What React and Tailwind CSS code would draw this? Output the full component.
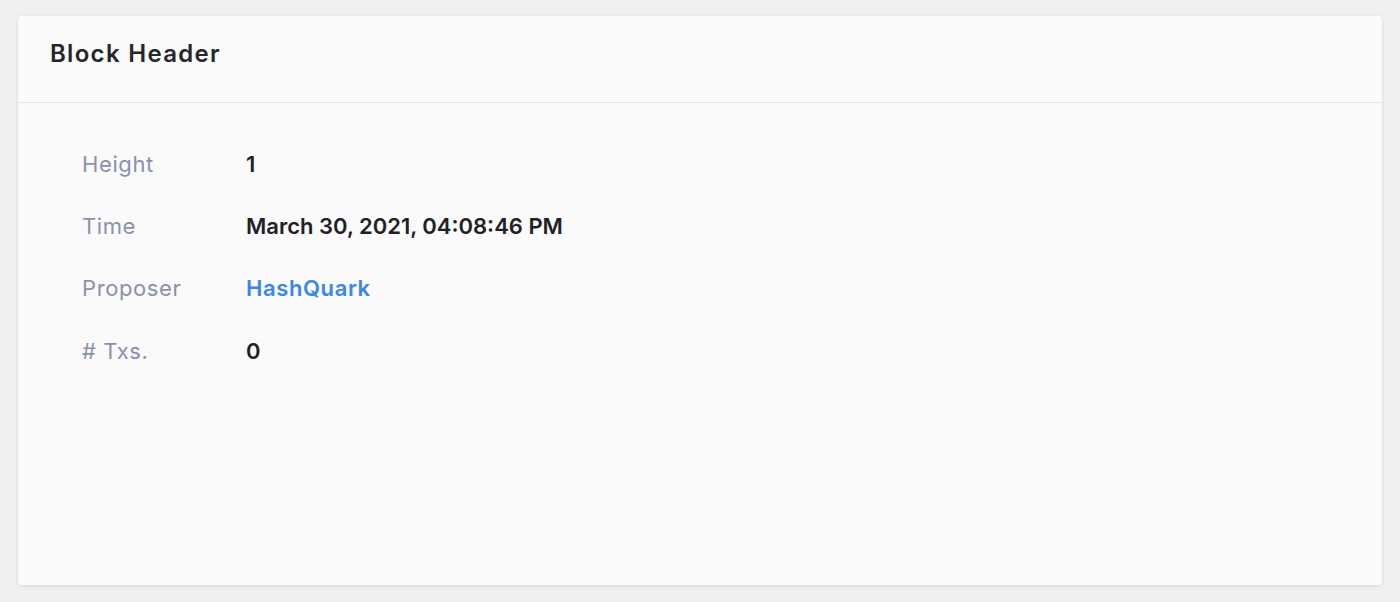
import React from 'react';

const rows = [
  { label: 'Height', value: '1' },
  { label: 'Time', value: 'March 30, 2021, 04:08:46 PM' },
  { label: 'Proposer', value: 'HashQuark', link: true },
  { label: '# Txs.', value: '0' },
];

export default function App() {
  return (
    <div className="min-h-screen bg-[#f0f0f0] px-[18px] pt-4 pb-[17px]" style={{ fontFamily: 'Inter, "Noto Sans", sans-serif' }}>
      <div className="bg-[#fafafa] rounded-[4px] shadow-[0_1px_4px_rgba(0,0,0,0.12)] h-[569px] flex flex-col">
        <div className="h-[87px] flex items-center px-8 pb-[11px] border-b border-[#e3e3e6]">
          <h2 className="text-[24px] font-semibold text-[#26262b] tracking-[1.3px]">Block Header</h2>
        </div>
        <div className="px-16 pt-[30px] flex flex-col">
          {rows.map((r) => (
            <div key={r.label} className="flex items-center h-[62.3px]">
              <div className="w-[164px] text-[22px] text-[#8892ab] tracking-[0.6px]">{r.label}</div>
              <div className={`text-[22px] font-semibold ${r.link ? 'text-[#3a86ea] tracking-[0.6px]' : 'text-[#212125]'}`}>
                {r.value}
              </div>
            </div>
          ))}
        </div>
      </div>
    </div>
  );
}
